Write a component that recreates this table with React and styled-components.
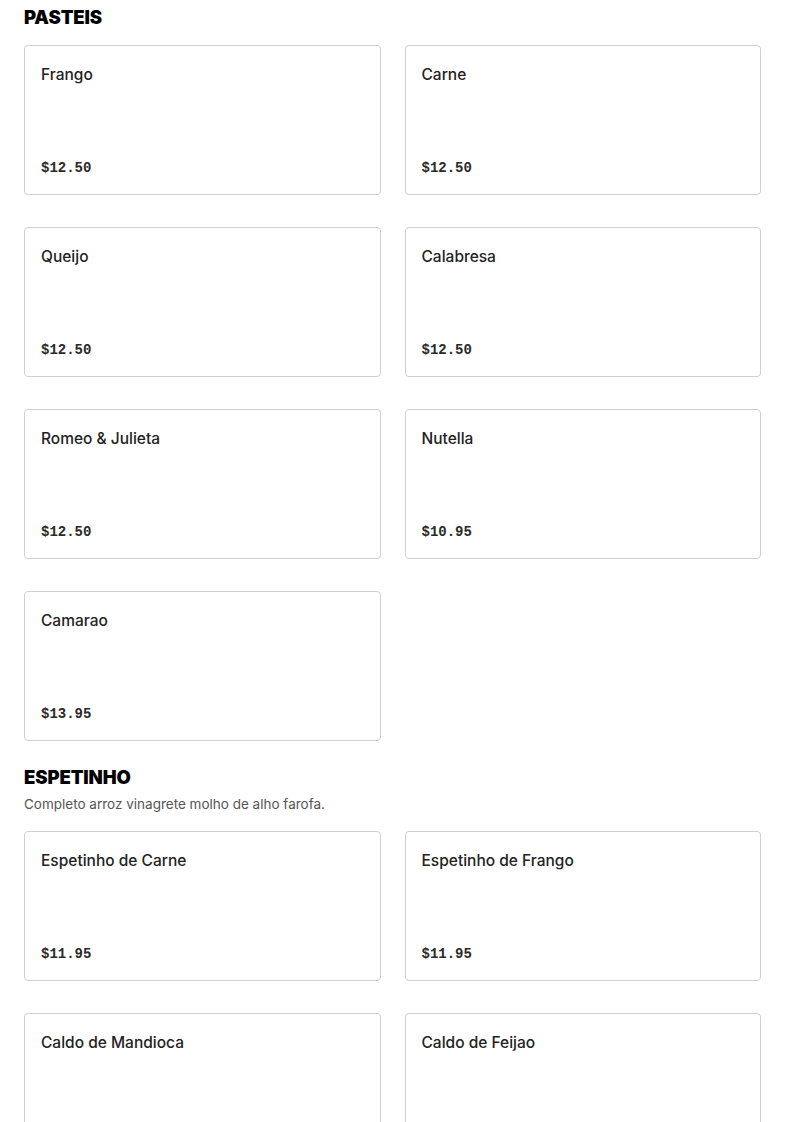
import React from "react";
import styled, { createGlobalStyle } from "styled-components";

const GlobalStyle = createGlobalStyle`
  body {
    margin: 0;
    background: #fff;
    font-family: Inter, "Liberation Sans", sans-serif;
    color: #1f1f1f;
  }
`;

const sections = [
  {
    title: "PASTEIS",
    items: [
      { name: "Frango", price: "$12.50" },
      { name: "Carne", price: "$12.50" },
      { name: "Queijo", price: "$12.50" },
      { name: "Calabresa", price: "$12.50" },
      { name: "Romeo & Julieta", price: "$12.50" },
      { name: "Nutella", price: "$10.95" },
      { name: "Camarao", price: "$13.95" },
    ],
  },
  {
    title: "ESPETINHO",
    description: "Completo arroz vinagrete molho de alho farofa.",
    items: [
      { name: "Espetinho de Carne", price: "$11.95" },
      { name: "Espetinho de Frango", price: "$11.95" },
      { name: "Caldo de Mandioca", price: "$9.95" },
      { name: "Caldo de Feijao", price: "$9.95" },
    ],
  },
];

const Page = styled.main`
  padding: 5px 24px 24px;
  display: flex;
  flex-direction: column;
  gap: 24px;
`;

const Section = styled.section`
  display: flex;
  flex-direction: column;
`;

const Title = styled.h2`
  margin: 0;
  font-size: 18.5px;
  line-height: 24px;
  font-weight: 900;
  letter-spacing: -0.1px;
  color: #000;
`;

const Description = styled.p`
  margin: 3px 0 0;
  font-size: 13.5px;
  line-height: 24px;
  color: #555;
`;

const Grid = styled.div`
  margin-top: ${(p) => (p.$withDesc ? "15px" : "16px")};
  display: grid;
  grid-template-columns: 1fr 1fr;
  gap: 32px 24px;
`;

const Card = styled.div`
  box-sizing: border-box;
  height: 150px;
  padding: 17px 16px 16px;
  border: 1px solid #cfcfcf;
  border-radius: 4px;
  display: flex;
  flex-direction: column;
  justify-content: space-between;
`;

const Name = styled.div`
  font-size: 15.5px;
  line-height: 24px;
  font-weight: 500;
  color: #222;
`;

const Price = styled.div`
  font-family: "Liberation Mono", "DejaVu Sans Mono", monospace;
  font-size: 14px;
  line-height: 20px;
  font-weight: 700;
  color: #2a2a2a;
`;

export default function App() {
  return (
    <>
      <GlobalStyle />
      <Page>
        {sections.map((s) => (
          <Section key={s.title}>
            <Title>{s.title}</Title>
            {s.description && <Description>{s.description}</Description>}
            <Grid $withDesc={!!s.description}>
              {s.items.map((item) => (
                <Card key={item.name}>
                  <Name>{item.name}</Name>
                  <Price>{item.price}</Price>
                </Card>
              ))}
            </Grid>
          </Section>
        ))}
      </Page>
    </>
  );
}
